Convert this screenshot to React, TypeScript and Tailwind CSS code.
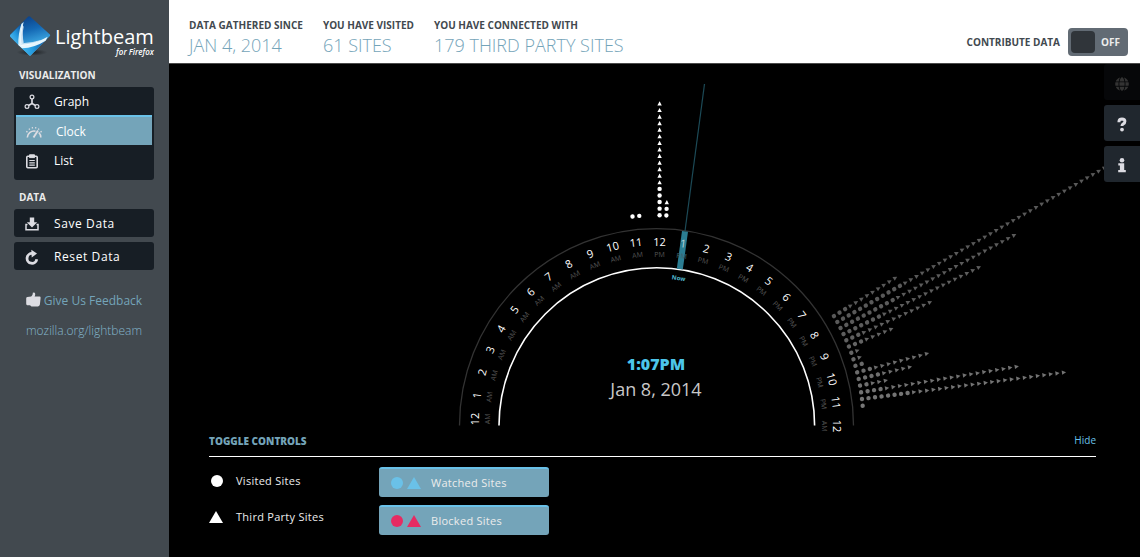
import React, { useState } from "react";
import { FaGlobe } from "react-icons/fa";

const CX = 656;
const CY = 422.5;
const OFFSET = 3.6;
const BASE = 207.3;
const STEP = 6.57;

type Column = { slot: number; sites: number; thirdParty: number; fill: string };

const columns: Column[] = [
  { slot: -4, sites: 1, thirdParty: 0, fill: "#ffffff" },
  { slot: -3, sites: 1, thirdParty: 0, fill: "#ffffff" },
  { slot: 0, sites: 5, thirdParty: 13, fill: "#ffffff" },
  { slot: 1, sites: 2, thirdParty: 1, fill: "#ffffff" },
  { slot: 31, sites: 3, thirdParty: 9, fill: "#595959" },
  { slot: 32, sites: 12, thirdParty: 37, fill: "#595959" },
  { slot: 33, sites: 10, thirdParty: 21, fill: "#5b5b5b" },
  { slot: 34, sites: 7, thirdParty: 17, fill: "#5d5d5d" },
  { slot: 35, sites: 3, thirdParty: 12, fill: "#606060" },
  { slot: 36, sites: 3, thirdParty: 5, fill: "#636363" },
  { slot: 37, sites: 1, thirdParty: 1, fill: "#656565" },
  { slot: 38, sites: 1, thirdParty: 1, fill: "#686868" },
  { slot: 39, sites: 2, thirdParty: 0, fill: "#6a6a6a" },
  { slot: 40, sites: 3, thirdParty: 9, fill: "#6c6c6c" },
  { slot: 41, sites: 4, thirdParty: 5, fill: "#6e6e6e" },
  { slot: 42, sites: 2, thirdParty: 3, fill: "#707070" },
  { slot: 43, sites: 4, thirdParty: 21, fill: "#727272" },
  { slot: 44, sites: 8, thirdParty: 24, fill: "#747474" },
  { slot: 45, sites: 1, thirdParty: 0, fill: "#777777" },
];

function SiteColumn({ slot, sites, thirdParty, fill }: Column) {
  return (
    <g transform={`translate(${CX} ${CY}) rotate(${slot * 1.875})`} fill={fill}>
      {Array.from({ length: sites + thirdParty }, (_, i) => {
        const y = -BASE - i * STEP;
        return i < sites ? (
          <circle key={i} cx={OFFSET} cy={y} r="2.2" />
        ) : (
          <path key={i} d={`M${OFFSET} ${y - 2.2}l2.2 4.2h-4.400z`} />
        );
      })}
    </g>
  );
}

function Clock() {
  const hours = Array.from({ length: 25 }, (_, i) => i);
  return (
    <svg viewBox="169 64 971 370" className="block w-full" role="img" aria-label="Sites visited by hour">
      <path d="M459.5 425.5a197 197 0 0 1 394 0" fill="none" stroke="#333333" strokeWidth="1.3" />
      <path d="M499 425.5a157.8 157.8 0 0 1 315.6 0" fill="none" stroke="#ffffff" strokeWidth="1.6" />
      <path d="M704.500 84L685 231" stroke="#1c4a57" strokeWidth="1.2" />
      {columns.map((c) => (
        <SiteColumn key={c.slot} {...c} />
      ))}
      {hours
        .filter((h) => h !== 13)
        .map((h) => (
          <g key={h} transform={`translate(${CX} ${CY}) rotate(${(h - 12) * 7.5})`} textAnchor="middle">
            <text x={OFFSET} y="-177" fontSize="11" fontWeight="500" fill="#ffffff">
              {h % 12 || 12}
            </text>
            <text x={OFFSET} y="-166" fontSize="7" fill="#555555">
              {h >= 12 && h < 24 ? "PM" : "AM"}
            </text>
          </g>
        ))}
      <path d="M682 231l6 .8-5.200 37.800-6-.8z" fill="#2b7d92" />
      <g transform={`translate(${CX} ${CY}) rotate(7.5)`} textAnchor="middle">
        <text x={OFFSET} y="-177" fontSize="11" fontWeight="500" fill="#b9d5dc">1</text>
        <text x={OFFSET} y="-166" fontSize="7" fill="#40616b">PM</text>
        <text x={OFFSET} y="-144" fontSize="6" fontWeight="700" fill="#53b9d0">Now</text>
      </g>
      <text x="656" y="370" textAnchor="middle" fontSize="16" fontWeight="800" fill="#4cc5ea">1:07PM</text>
      <text x="656" y="396" textAnchor="middle" fontSize="18" fontWeight="400" fill="#c8c8c8">Jan 8, 2014</text>
    </svg>
  );
}

function Logo() {
  return (
    <svg viewBox="6 6 126 126" className="size-[42px] shrink-0" aria-hidden="true">
      <defs>
        <linearGradient id="gemUpper" x1="0.2" y1="0" x2="0.5" y2="1">
          <stop offset="0" stopColor="#0a3a80" />
          <stop offset="0.4" stopColor="#1468b4" />
          <stop offset="0.8" stopColor="#41aee6" />
          <stop offset="1" stopColor="#8fd6f6" />
        </linearGradient>
        <linearGradient id="gemLeft" x1="1" y1="0" x2="0.2" y2="1">
          <stop offset="0" stopColor="#0d4791" />
          <stop offset="0.5" stopColor="#2397dd" />
          <stop offset="1" stopColor="#5cc3f0" />
        </linearGradient>
        <linearGradient id="gemLower" x1="0" y1="0" x2="1" y2="0">
          <stop offset="0" stopColor="#4cbcf0" />
          <stop offset="0.5" stopColor="#2299de" />
          <stop offset="1" stopColor="#0f4f9c" />
        </linearGradient>
        <radialGradient id="shade">
          <stop offset="0" stopColor="#15191c" stopOpacity="0.85" />
          <stop offset="1" stopColor="#15191c" stopOpacity="0" />
        </radialGradient>
      </defs>
      <ellipse cx="72" cy="121" rx="46" ry="10" fill="url(#shade)" />
      <path d="M60 14Q63 11 67 14L125 67Q128 70 125 73L69 129Q66 132 63 129L7 74Q5 71 7 68z" fill="url(#gemUpper)" />
      <path d="M40 36L7 68Q5 71 7 74L34 102Q31 66 40 36z" fill="url(#gemLeft)" />
      <path d="M34 102Q80 102 117 81L69 129Q66 132 63 129z" fill="url(#gemLower)" />
      <path d="M40 36Q30 66 31 99L41 106Q36 70 47 30z" fill="#d5effb" />
      <path d="M47 44Q42 66 47 92L38 98Q35 66 43 38z" fill="#ffffff" fillOpacity="0.75" />
      <path d="M31 98Q80 98 119 74L113 86Q80 107 42 109z" fill="#e6f6fd" />
      <path d="M42 94Q76 92 108 82L92 88Q68 100 38 101z" fill="#ffffff" fillOpacity="0.7" />
    </svg>
  );
}

const GraphIcon = () => (
  <svg viewBox="0 0 16 16" className="size-4" fill="none" stroke="#dcdce2" strokeWidth="1.2" aria-hidden="true">
    <circle cx="8" cy="3" r="1.900" />
    <circle cx="3" cy="12.500" r="1.900" />
    <circle cx="13" cy="12.500" r="1.900" />
    <path d="M8 5v4.500M8 9.500l-3.500 2M8 9.500l3.500 2" strokeWidth="1.700" />
  </svg>
);

const ClockIcon = () => (
  <svg viewBox="0 0 16 16" className="size-4" fill="none" stroke="#dcdce2" strokeWidth="1.600" aria-hidden="true">
    <path d="M1.300 13.500A6.800 6.800 0 0 1 9.500 7.200M12.800 8.500a7 7 0 0 1 2 5" />
    <path d="M7.500 13.500L12 6.500" strokeWidth="1.900" />
    <path d="M.3 7.300l1.200.8M3 4.600l.7 1.100M6.300 3.200l.2 1.300M9.800 3.200l-.2 1.300M13 4.600l-.7 1.100M15.700 7.300l-1.200.8" strokeWidth="1.300" />
  </svg>
);

const ListIcon = () => (
  <svg viewBox="0 0 16 16" className="size-4" fill="none" stroke="#dcdce2" strokeWidth="1.600" aria-hidden="true">
    <rect x="2.800" y="3.300" width="10.400" height="11.500" rx="1" />
    <path d="M5.500 1.800h5v2.800h-5z" fill="#dcdce2" strokeWidth="1" />
    <path d="M5.300 7.500h5.500M5.300 9.800h5.500M5.300 12.100h5.500" strokeWidth="1.200" />
  </svg>
);

const SaveIcon = () => (
  <svg viewBox="0 0 16 16" className="size-4" aria-hidden="true">
    <path d="M5.800 1.500h4.400v4.700h3L8 11.500 2.800 6.200h3z" fill="#dcdce2" />
    <path d="M3.500 8.500H2v5.200h12V8.500h-1.500" fill="none" stroke="#dcdce2" strokeWidth="1.500" />
  </svg>
);

const ResetIcon = () => (
  <svg viewBox="0 0 16 16" className="size-4" aria-hidden="true">
    <path d="M12.800 10.200A4.900 4.900 0 1 1 8.500 4.500" fill="none" stroke="#dcdce2" strokeWidth="2.800" />
    <path d="M7.300 .8l5.700 3.800-5.300 3.900z" fill="#dcdce2" />
  </svg>
);

const ThumbIcon = () => (
  <svg viewBox="0 0 15 15" className="mb-1 size-[15px]" fill="#dcdce2" aria-hidden="true">
    <path d="M5.200 4.500Q7 2.800 6.800.8q1.800-1 2.300.8.300 1.500-.5 3h5q1.200.2 1 1.500l-.7 6.500q-.3 1.600-1.900 1.800H5.500L4 13.300H1.200Q.2 13 .2 11.800V6.200q.2-1 1.200-1.100z" />
  </svg>
);

const HelpIcon = () => (
  <svg viewBox="0 0 14 16" className="h-4 w-3.5" aria-hidden="true">
    <path d="M4 6.300V5.100Q4.300 3 7 3q2.900.1 2.900 2.300Q9.900 7 8.300 7.800 7 8.500 7 10" fill="none" stroke="#dcdce2" strokeWidth="3" />
    <circle cx="7" cy="13.600" r="1.900" fill="#dcdce2" />
  </svg>
);

const InfoIcon = () => (
  <svg viewBox="0 0 14 16" className="h-4 w-3.5" fill="#dcdce2" aria-hidden="true">
    <circle cx="7" cy="3.200" r="2.300" />
    <path d="M3.300 6.300h5.900v6.700h1.600v2.200H3.200V13h1.700V8.400H3.300z" />
  </svg>
);

const views = [
  { name: "Graph", Icon: GraphIcon },
  { name: "Clock", Icon: ClockIcon },
  { name: "List", Icon: ListIcon },
];

function Sidebar() {
  const [view, setView] = useState("Clock");
  return (
    <aside className="flex w-[169px] shrink-0 flex-col bg-[#42494f] pt-3.5 pr-[15px] pl-3.5 text-[12px] text-white">
      <div className="-ml-1 flex h-[47px] items-start">
        <Logo />
        <div className="ml-[3px] flex flex-col items-end pt-[13px]">
          <span className="text-[20px] leading-5 font-medium">Lightbeam</span>
          <span className="text-[8px] leading-[10px] font-semibold italic">for Firefox</span>
        </div>
      </div>
      <h2 className="mt-2 ml-[5px] text-[10px] leading-3 font-bold text-[#ececec]">VISUALIZATION</h2>
      <nav className="mt-1.5 overflow-hidden rounded-[3px] bg-[#171e25] pb-[5px]">
        {views.map(({ name, Icon }) => (
          <button
            key={name}
            type="button"
            onClick={() => setView(name)}
            className={
              view === name
                ? "mx-0.5 flex h-[30px] w-[136px] items-center gap-3.5 border-t-2 border-[#6ac1e8] bg-[#74a4b9] pt-px pl-2.5"
                : "flex h-[30px] w-full items-center gap-3.5 pt-0.5 pl-2.5 first:h-7"
            }
          >
            <Icon />
            {name}
          </button>
        ))}
      </nav>
      <h2 className="mt-[11px] ml-[5px] text-[10px] leading-3 font-bold text-[#ececec]">DATA</h2>
      <div className="mt-1.5 flex flex-col gap-[5px] tracking-wider">
        <button type="button" className="flex h-7 items-center gap-3.5 rounded-[3px] bg-[#171e25] pt-0.5 pl-2.5">
          <SaveIcon />
          Save Data
        </button>
        <button type="button" className="flex h-7 items-center gap-3.5 rounded-[3px] bg-[#171e25] pt-0.5 pl-2.5">
          <ResetIcon />
          Reset Data
        </button>
      </div>
      <div className="mt-[22px] flex flex-col items-center gap-3 text-[#74a4b9]">
        <a href="#feedback" className="flex h-[18px] items-center gap-[3px]">
          <ThumbIcon />
          Give Us Feedback
        </a>
        <a href="#lightbeam" className="leading-[18px] font-light text-[#84b6cc]">mozilla.org/lightbeam</a>
      </div>
    </aside>
  );
}

function Stat({ label, value }: { label: string; value: string }) {
  return (
    <div>
      <div className="text-[10px] leading-4 font-bold">{label}</div>
      <div className="text-[18px] leading-6 font-light text-[#74a4b9]">{value}</div>
    </div>
  );
}

function Header() {
  const [on, setOn] = useState(false);
  return (
    <header className="flex h-16 items-start border-b border-[#4a4a4a] bg-white pr-3 pl-5 text-[#42494f]">
      <div className="flex gap-5 pt-[17px]">
        <Stat label="DATA GATHERED SINCE" value="JAN 4, 2014" />
        <Stat label="YOU HAVE VISITED" value="61 SITES" />
        <Stat label="YOU HAVE CONNECTED WITH" value="179 THIRD PARTY SITES" />
      </div>
      <div className="ml-auto flex items-center gap-2 pt-7">
        <span id="contribute" className="text-[10px] font-bold">CONTRIBUTE DATA</span>
        <button
          type="button"
          role="switch"
          aria-checked={on}
          aria-labelledby="contribute"
          onClick={() => setOn(!on)}
          className="flex h-7 w-[60px] items-center justify-between rounded-[4px] bg-[#626b74] pr-2 pl-[3px] text-[10px] font-bold text-[#ececec]"
        >
          <span className="h-[22px] w-6 rounded-[4px] bg-[#30353a]" />
          {on ? "ON" : "OFF"}
        </button>
      </div>
    </header>
  );
}

const Dot = ({ className }: { className: string }) => (
  <svg viewBox="0 0 12 12" className={className} fill="currentColor" aria-hidden="true">
    <circle cx="6" cy="6" r="6" />
  </svg>
);

const Triangle = ({ className }: { className: string }) => (
  <svg viewBox="0 0 14 12" className={className} fill="currentColor" aria-hidden="true">
    <path d="M7 0l7 12H0z" />
  </svg>
);

function ToggleControls() {
  const [open, setOpen] = useState(true);
  return (
    <section className="pr-11 pb-5 pl-10 text-[11px]">
      <div className="flex h-[23px] items-start justify-between border-b border-white text-[#74a4b9]">
        <h2 className="text-[10px] leading-[15px] font-extrabold">TOGGLE CONTROLS</h2>
        <button type="button" onClick={() => setOpen(!open)} className="text-[10px] leading-3 text-[#6ac1e8]">
          Hide
        </button>
      </div>
      {open && (
        <div className="flex pt-2.5 tracking-wide text-[#ececec]">
          <div className="flex w-[170px] flex-col gap-2">
            <div className="flex h-7 items-center gap-2.5">
              <Dot className="mr-px h-3 w-4 text-white" />
              Visited Sites
            </div>
            <div className="flex h-7 items-center gap-2.5">
              <Triangle className="mr-[3px] h-3 w-3.5 text-white" />
              Third Party Sites
            </div>
          </div>
          <div className="flex w-[170px] flex-col gap-2">
            <button type="button" className="flex h-[30px] items-center rounded-[3px] border-t-2 border-[#6ac1e8] bg-[#74a4b9] pl-3">
              <Dot className="size-3 text-[#6ac1e8]" />
              <Triangle className="mr-2.5 ml-1 h-3 w-3.5 text-[#6ac1e8]" />
              Watched Sites
            </button>
            <button type="button" className="flex h-[30px] items-center rounded-[3px] border-t-2 border-[#6ac1e8] bg-[#74a4b9] pl-3">
              <Dot className="size-3 text-[#e62b62]" />
              <Triangle className="mr-2.5 ml-1 h-3 w-3.5 text-[#e62b62]" />
              Blocked Sites
            </button>
          </div>
        </div>
      )}
    </section>
  );
}

export default function App() {
  return (
    <div className="flex min-h-screen bg-black font-['Open_Sans',sans-serif]">
      <Sidebar />
      <div className="flex min-w-0 flex-1 flex-col">
        <Header />
        <main className="relative flex-1">
          <Clock />
          <div className="absolute top-0 right-0 flex flex-col gap-[5px]">
            <button type="button" aria-label="World" className="flex h-9 w-9 items-center justify-center rounded-l-[3px] bg-[#060709] pt-1 text-[#333333]">
              <FaGlobe className="size-[14px]" />
            </button>
            <button type="button" aria-label="Help" className="flex h-9 w-9 items-center justify-center rounded-l-[3px] bg-[#20272e] pt-0.5">
              <HelpIcon />
            </button>
            <button type="button" aria-label="Information" className="flex h-9 w-9 items-center justify-center rounded-l-[3px] bg-[#20272e] pt-0.5">
              <InfoIcon />
            </button>
          </div>
          <ToggleControls />
        </main>
      </div>
    </div>
  );
}
